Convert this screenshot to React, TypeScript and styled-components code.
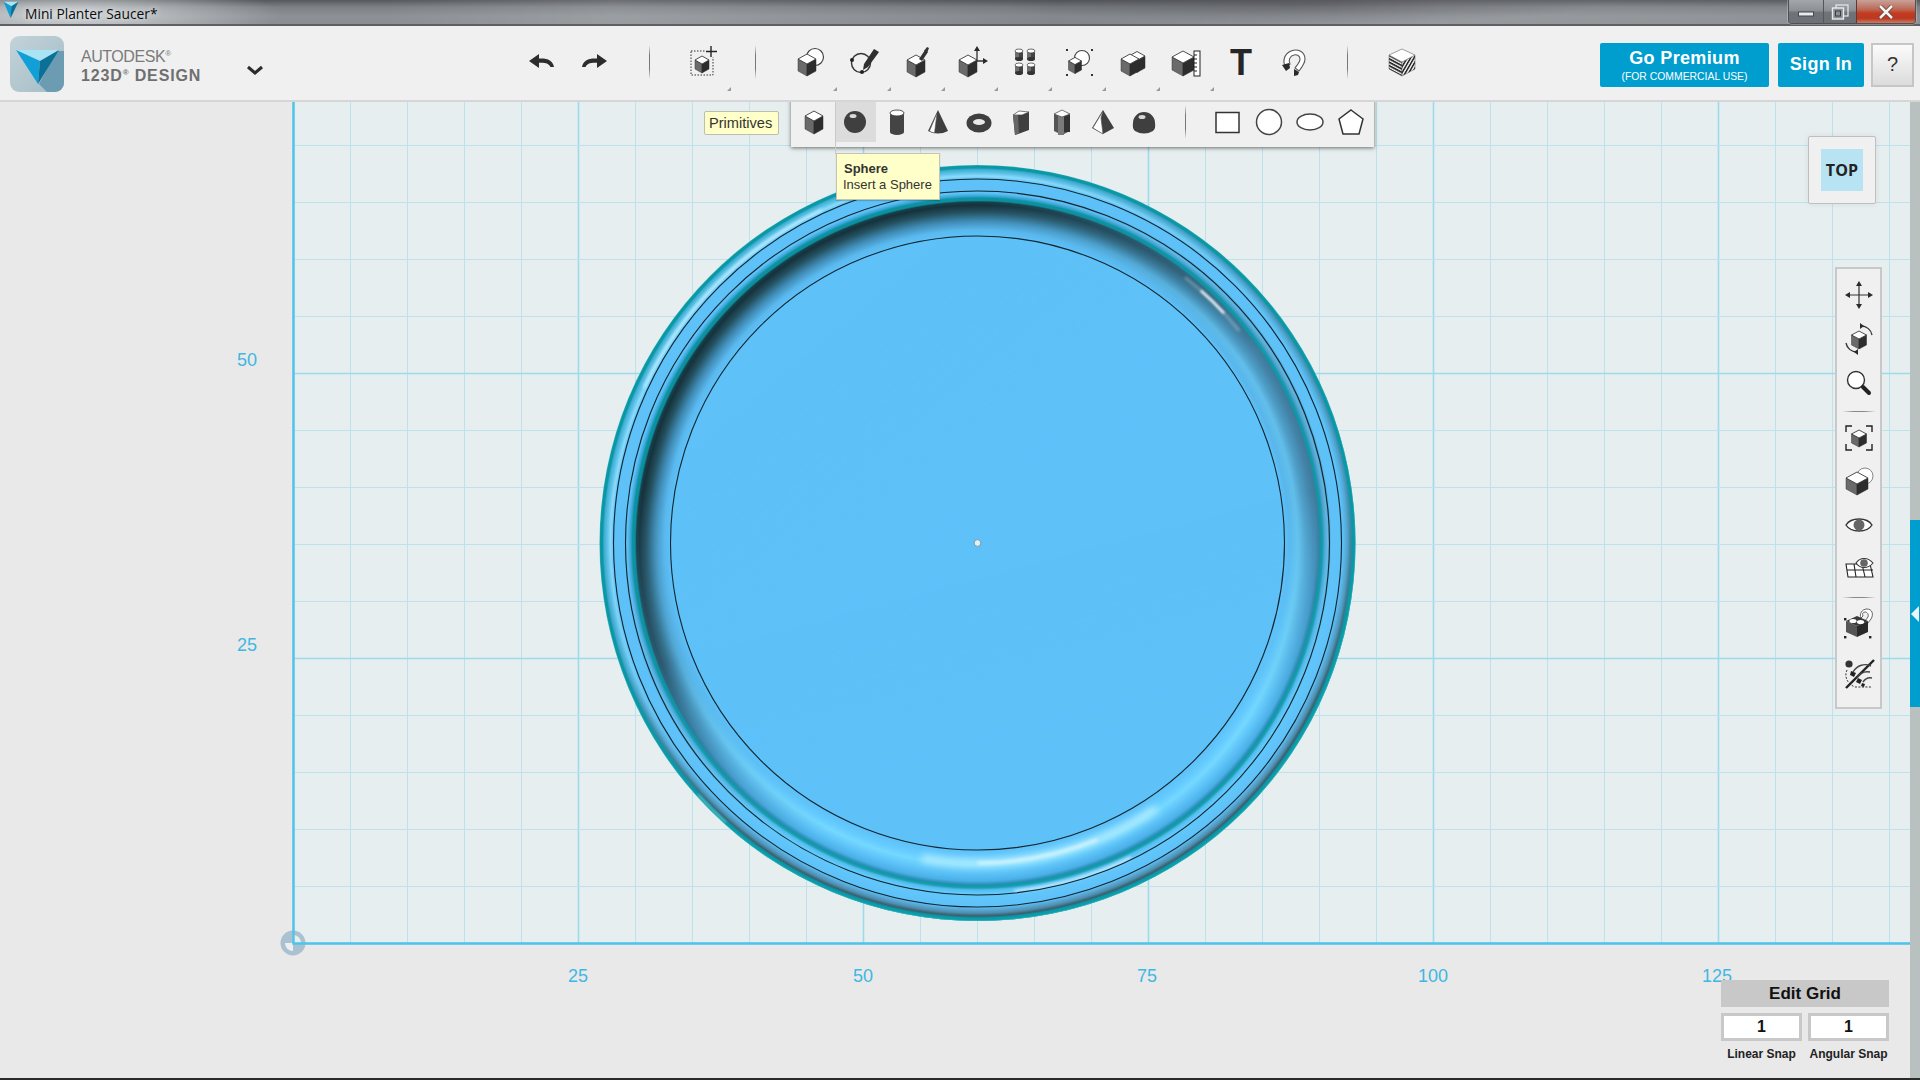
import React from "react";
import styled, { createGlobalStyle } from "styled-components";

const Global = createGlobalStyle`
  html, body { margin: 0; padding: 0; width: 1920px; height: 1080px; overflow: hidden; background: #e9e9e9; }
  body { font-family: "Liberation Sans", Arial, sans-serif; }
`;

const Root = styled.div`
  width: 1920px; height: 1080px; display: flex; flex-direction: column; overflow: hidden;
  border-bottom: 2px solid #2b2b2b; box-sizing: border-box;
`;

const TitleBar = styled.div`
  height: 26px; flex: none; display: flex; align-items: flex-start; box-sizing: border-box;
  border-bottom: 2px solid #5e6063;
  background:
    radial-gradient(ellipse 210px 34px at 70px 14px, rgba(232,236,238,.75), rgba(232,236,238,0) 100%),
    radial-gradient(ellipse 300px 20px at 1300px 4px, rgba(70,72,76,.45), rgba(70,72,76,0) 100%),
    linear-gradient(90deg, rgba(255,255,255,0) 0 20%, rgba(255,255,255,.12) 32%, rgba(0,0,0,.06) 55%, rgba(255,255,255,.1) 75%, rgba(0,0,0,0) 100%),
    linear-gradient(180deg, #56585c 0, #7d8085 7px, #8d9195 16px, #8b8f93 100%);
`;
const TitleMark = styled.span`display: flex; width: 21px; height: 22px; margin-top: 1px; justify-content: center;`;
const TitleText = styled.span`
  font-family: "Open Sans", "Liberation Sans", sans-serif; font-size: 13.8px; line-height: 27px; color: #0c0c0c;
  text-shadow: 0 0 6px rgba(255,255,255,.9); margin-left: 4px;
`;
const WindowButtons = styled.div`
  margin-left: auto; margin-right: 4px; display: flex; height: 23px; border: 1px solid #4d5054; border-top: 0;
  border-radius: 0 0 4px 4px; overflow: hidden; box-shadow: 0 0 0 1px rgba(255,255,255,.25);
`;
const WinBtn = styled.div<{ $w: number; $close?: boolean }>`
  width: ${p => p.$w}px; display: flex; align-items: center; justify-content: center;
  border-left: 1px solid ${p => (p.$close ? "#5b3a33" : "#54575a")};
  &:first-child { border-left: 0; }
  background: ${p =>
    p.$close
      ? "linear-gradient(180deg,#c9a198 0,#bb6a58 40%,#c53a1e 58%,#b93a22 80%,#cf7a60 100%)"
      : "linear-gradient(180deg,#a3a7aa 0,#8d9195 45%,#6f7377 55%,#6d7175 100%)"};
`;

const Toolbar = styled.div`
  height: 76px; flex: none; display: flex; align-items: center; box-sizing: border-box;
  background: #f0f0f0; border-bottom: 2px solid #d6d6d6; padding: 0 6px 3px 10px;
`;
const Brand = styled.div`width: 506px; flex: none; display: flex; align-items: center; margin-top: 4px;`;
const BrandText = styled.div`margin-left: 17px; margin-top: 6px; width: 160px; display: flex; flex-direction: column; color: #7b7b7b;`;
const BrandTop = styled.span`font-size: 16px; line-height: 18px; letter-spacing: -.45px; sup { font-size: 8px; line-height: 0; }`;
const BrandBottom = styled.span`font-size: 16px; line-height: 19px; font-weight: 700; letter-spacing: .85px; color: #6f6f6f; sup { font-size: 8px; line-height: 0; }`;
const Chevron = styled.span`display: flex; margin-left: 5px; margin-top: 15px;`;

const UndoSlot = styled.div`width: 52px; height: 58px; flex: none; display: flex; align-items: center; justify-content: center;`;
const ToolSep = styled.div<{ $ml: number }>`
  width: 1px; height: 34px; flex: none; margin-left: ${p => p.$ml}px; margin-bottom: 0;
  background: linear-gradient(180deg, rgba(90,90,90,0), #777 30%, #777 70%, rgba(90,90,90,0));
`;
const ToolSlot = styled.div<{ $ml?: number; $mark?: boolean }>`
  width: 53.9px; height: 58px; flex: none; margin-left: ${p => p.$ml ?? 0}px; display: flex; align-items: center; justify-content: center; position: relative;
  ${p => p.$mark ? `&::after { content: ""; position: absolute; right: 0; bottom: 0; border-style: solid; border-width: 0 0 4px 4px; border-color: transparent transparent #9a9a9a transparent; }` : ""}
`;
const TextTool = styled.span`font-size: 36px; line-height: 36px; font-weight: 700; color: #262626; margin-top: 2px;`;
const AccountArea = styled.div`margin-left: auto; display: flex; align-items: stretch; height: 44px; margin-top: 6px;`;
const PremiumButton = styled.div`
  width: 169px; background: #009dcf; border-radius: 2px; color: #fff; display: flex; flex-direction: column; align-items: center; justify-content: center;
`;
const PremiumMain = styled.span`font-size: 18px; line-height: 20px; font-weight: 700; letter-spacing: .35px; margin-top: 1px;`;
const PremiumSub = styled.span`font-size: 10.4px; line-height: 13px; margin-top: 2px;`;
const SignIn = styled.div`
  width: 86px; margin-left: 9px; background: #009dcf; border-radius: 2px; color: #fff; font-size: 18px; font-weight: 700; letter-spacing: .35px;
  display: flex; align-items: center; justify-content: center;
`;
const HelpButton = styled.div`
  width: 43px; margin-left: 7px; box-sizing: border-box; border: 2px solid #c6c6c6; background: linear-gradient(180deg,#fbfbfb,#dcdcdc); color: #333;
  font-size: 20px; display: flex; align-items: center; justify-content: center;
`;

const Canvas = styled.div`flex: 1; position: relative; background: #e9e9e9; overflow: hidden;`;
const Scene = styled.svg`display: block; position: absolute; left: 0; top: 0; width: 1920px; height: 976px;`;
const AxisLabel = styled.span<{ $x: number; $y: number }>`
  position: absolute; left: ${p => p.$x}px; top: ${p => p.$y - 102}px; transform: translate(-50%, -50%);
  color: #3fb7e2; font-size: 18px; line-height: 20px;
`;
const SideStrip = styled.div`
  position: absolute; right: 0; top: 0; bottom: 0; width: 10px; background: #b9c0c0;
`;
const SideHandle = styled.div`
  position: absolute; left: 0; right: 0; top: 418px; height: 187px; background: #009dcf; display: flex; align-items: center;
  &::after { content: ""; margin-top: 0; border-style: solid; border-width: 8px 8px 8px 0; border-color: transparent #eaf6fb transparent transparent; margin-left: 1px; }
`;

const Popup = styled.div`
  position: absolute; left: 791px; top: -4px; width: 583px; height: 49px; box-sizing: border-box; background: #f0f0f0;
  box-shadow: 0 1px 4px rgba(0,0,0,.55); display: flex; align-items: center; padding: 0 0 2px 2.4px;
  &::before { content: ""; position: absolute; left: 19px; top: -6px; border-style: solid; border-width: 0 6px 6px 6px; border-color: transparent transparent #f0f0f0 transparent; }
`;
const PopSlot = styled.div<{ $active?: boolean }>`
  width: 41.3px; height: 40px; flex: none; display: flex; align-items: center; justify-content: center;
  background: ${p => (p.$active ? "#dcdcdc" : "transparent")};
`;
const PopSep = styled.div`
  width: 1px; height: 34px; flex: none; margin: 0 21px 0 19.5px;
  background: linear-gradient(180deg, rgba(90,90,90,0), #777 30%, #777 70%, rgba(90,90,90,0));
`;
const TipGuide = styled.div`position: absolute; left: 835px; top: -12px; width: 1px; height: 64px; background: #c9c9c9;`;
const PrimitivesTip = styled.div`
  position: absolute; left: 704px; top: 9px; width: 75px; height: 24px; box-sizing: border-box; background: #ffffc9; border: 1px solid #bdbdb0; border-radius: 2px;
  color: #333; font-size: 14.6px; line-height: 22px; padding-left: 4px; white-space: nowrap;
`;
const SphereTip = styled.div`
  position: absolute; left: 836px; top: 51px; width: 104px; height: 47px; box-sizing: border-box; background: #ffffc9; border: 1px solid #c4c4b4; border-left-width: 1px;
  box-shadow: 0 1px 1px rgba(0,0,0,.18); color: #333; padding: 7px 0 0 6px; font-size: 13px; line-height: 16px;
`;
const TipTitle = styled.div`font-weight: 700; padding-left: 1px;`;

const ViewCube = styled.div`
  position: absolute; left: 1808px; top: 34px; width: 68px; height: 68px; box-sizing: border-box; background: #f0f0f0; border: 1px solid #bfbfbf; border-radius: 2px;
  box-shadow: 0 0 6px rgba(0,0,0,.08); display: flex; align-items: center; justify-content: center;
`;
const ViewFace = styled.div`
  width: 42px; height: 42px; background: #b8e3f2; color: #222; font-family: "Open Sans", "Liberation Sans", sans-serif; font-size: 16px; font-weight: 700; letter-spacing: .1px;
  display: flex; align-items: center; justify-content: center;
`;

const NavPanel = styled.div`
  position: absolute; left: 1835px; top: 165px; width: 47px; height: 442px; box-sizing: border-box; background: #f0f0f0; border: 2px solid #c8c8c8;
  display: flex; flex-direction: column; align-items: center; padding-top: 5px;
`;
const NavGroup = styled.div<{ $gap: number; $mt?: number }>`display: flex; flex-direction: column; gap: ${p => p.$gap}px; margin-top: ${p => p.$mt ?? 0}px;`;
const NavSlot = styled.div`width: 42px; height: 42px; display: flex; align-items: center; justify-content: center;`;
const NavSep = styled.div<{ $mt: number }>`
  width: 34px; height: 1px; flex: none; margin-top: ${p => p.$mt}px;
  background: linear-gradient(90deg, rgba(90,90,90,0), #888 35%, #888 65%, rgba(90,90,90,0));
`;

const GridPanel = styled.div`position: absolute; left: 1721px; top: 878px; width: 168px; display: flex; flex-direction: column;`;
const EditGridButton = styled.div`
  height: 27px; background: #c8c8c8; color: #111; font-size: 17px; font-weight: 700; line-height: 27px; text-align: center;
`;
const SnapRow = styled.div`display: grid; grid-template-columns: 81px 81px; gap: 6px; margin-top: 6px;`;
const SnapCell = styled.div`display: flex; flex-direction: column; align-items: center;`;
const SnapInput = styled.div`
  width: 100%; height: 28px; box-sizing: border-box; border: 3px solid #c8c8c8; background: #fff; color: #111; font-size: 16px; font-weight: 700; line-height: 22px; text-align: center;
`;
const SnapLabel = styled.span`margin-top: 6px; font-size: 12px; line-height: 14px; font-weight: 700; color: #222; white-space: nowrap;`;

const Glyph = styled.svg<{ $s?: number }>`display: block; width: ${p => p.$s ?? 32}px; height: ${p => p.$s ?? 32}px; overflow: visible;`;

/* ---------- drawing helpers ---------- */
const pt = (a: [number, number][]) => a.map(p => p.join(",")).join(" ");
const Cube = ({ x, y, w, d, h }: { x: number; y: number; w: number; d: number; h: number }) => (
  <g>
    <polygon points={pt([[x - w, y], [x, y + d], [x, y + d + h], [x - w, y + h]])} fill="#6a6a6a" stroke="#3a3a3a" strokeWidth=".5" />
    <polygon points={pt([[x + w, y], [x, y + d], [x, y + d + h], [x + w, y + h]])} fill="#2d2d2d" stroke="#2d2d2d" strokeWidth=".5" />
    <polygon points={pt([[x, y - d], [x + w, y], [x, y + d], [x - w, y]])} fill="#fff" stroke="#3a3a3a" strokeWidth=".9" />
  </g>
);
const Arrow = ({ d }: { d: string }) => <path d={d} fill="#2a2a2a" />;

const IconUndo = () => (
  <Glyph viewBox="0 0 32 32"><path d="M3 15l10-7v4.6c8 -.6 14 1.8 15 8.4h-3.6c-1-3.2-5-4.6-11.4-4.2V22z" fill="#2d2d2d" /></Glyph>
);
const IconRedo = () => (
  <Glyph viewBox="0 0 32 32"><path d="M29 15L19 8v4.6C11 12 5 14.4 4 21h3.6c1-3.2 5-4.6 11.4-4.2V22z" fill="#2d2d2d" /></Glyph>
);
const IconAdd = () => (
  <Glyph viewBox="0 0 32 32">
    <rect x="3" y="5" width="22" height="24" fill="none" stroke="#333" strokeWidth="1" strokeDasharray="1.5 1.5" />
    <rect x="17" y="0" width="12" height="11" fill="#f0f0f0" />
    <path d="M23 0v11M18 5.5h11" stroke="#222" strokeWidth="1.4" />
    <Cube x={14} y={14} w={7} d={4} h={9} />
  </Glyph>
);
const IconPrimitives = () => (
  <Glyph viewBox="0 0 32 32">
    <circle cx="21" cy="11" r="8.5" fill="#fff" stroke="#444" strokeWidth="1.2" />
    <Cube x={13} y={13} w={9} d={5} h={12} />
  </Glyph>
);
const IconSketch = () => (
  <Glyph viewBox="0 0 32 32">
    <circle cx="13" cy="17" r="9.5" fill="none" stroke="#333" strokeWidth="1.4" />
    <path d="M26 3l5 3-11 15-5 3 1-6z" fill="#2f2f2f" />
    <circle cx="4" cy="14" r="2" fill="#222" /><circle cx="14" cy="26" r="2" fill="#222" />
  </Glyph>
);
const IconConstruct = () => (
  <Glyph viewBox="0 0 32 32">
    <Cube x={14} y={14} w={9} d={5} h={12} />
    <path d="M17 13l6-9 3 2-6 9z" fill="#333" /><path d="M22 5l3-4 2 1-2 5z" fill="#333" />
  </Glyph>
);
const IconModify = () => (
  <Glyph viewBox="0 0 32 32">
    <Cube x={12} y={14} w={9} d={5} h={12} />
    <path d="M21 2v13h9" fill="none" stroke="#333" strokeWidth="1.3" />
    <Arrow d="M21 0l3 5h-6z" /><Arrow d="M32 15l-5 3v-6z" />
  </Glyph>
);
const Can = ({ x, y }: { x: number; y: number }) => (
  <g>
    <rect x={x - 4} y={y} width="8" height="8" fill="#444" />
    <rect x={x - 4} y={y} width="4" height="8" fill="#6f6f6f" />
    <ellipse cx={x} cy={y + 8} rx="4" ry="2" fill="#333" />
    <ellipse cx={x} cy={y} rx="4" ry="2" fill="#fff" stroke="#333" strokeWidth=".7" />
  </g>
);
const IconPattern = () => (
  <Glyph viewBox="0 0 32 32">
    <Can x={10} y={5} /><Can x={22} y={5} /><Can x={10} y={19} /><Can x={22} y={19} />
  </Glyph>
);
const IconGroup = () => (
  <Glyph viewBox="0 0 32 32">
    <circle cx="19" cy="12" r="7.5" fill="#fff" stroke="#444" strokeWidth="1.1" />
    <Cube x={12} y={15} w={6.5} d={3.6} h={9} />
    {[[3, 3], [28, 3], [3, 28], [28, 28]].map(([a, b]) => <rect key={a + "-" + b} x={a} y={b} width="2" height="2" fill="#333" />)}
  </Glyph>
);
const IconCombine = () => (
  <Glyph viewBox="0 0 32 32">
    <Cube x={20} y={10} w={8} d={4.5} h={12} />
    <Cube x={13} y={13} w={9} d={5} h={12} />
  </Glyph>
);
const IconMeasure = () => (
  <Glyph viewBox="0 0 32 32">
    <Cube x={12} y={11} w={11} d={6} h={13} />
    <rect x="23" y="5" width="6" height="25" fill="#fff" stroke="#222" strokeWidth="1" />
    <path d="M23 9h3M23 13h3M23 17h3M23 21h3M23 25h3" stroke="#222" strokeWidth="1.2" />
  </Glyph>
);
const IconMagnet = () => (
  <Glyph viewBox="0 0 32 32">
    <path d="M7 21C3 16 5 8 12 5c7-3 14 1 14 8 0 4-2 7-6 12l-4-3c3-4 5-6 5-9 0-3-3-5-6-4-4 1-6 5-4 9z" fill="#fff" stroke="#555" strokeWidth="1.1" />
    <path d="M3 19l7-2 1 5-4 3z" fill="#2a2a2a" /><path d="M15 23l5 3-1 3-4 1z" fill="#2a2a2a" />
  </Glyph>
);
const IconMaterial = () => (
  <Glyph viewBox="0 0 32 32">
    <defs>
      <pattern id="stripeL" width="4" height="3.4" patternUnits="userSpaceOnUse" patternTransform="skewY(28)"><rect width="4" height="3.4" fill="#f4f4f4" /><rect width="4" height="2" fill="#2b2b2b" /></pattern>
      <pattern id="stripeR" width="3.4" height="4" patternUnits="userSpaceOnUse" patternTransform="skewX(-30)"><rect width="3.4" height="4" fill="#f4f4f4" /><rect width="1.8" height="4" fill="#2b2b2b" /></pattern>
    </defs>
    <polygon points="3,9 16,16 16,30 3,23" fill="url(#stripeL)" stroke="#555" strokeWidth=".5" />
    <polygon points="29,9 16,16 16,30 29,23" fill="url(#stripeR)" stroke="#555" strokeWidth=".5" />
    <polygon points="16,3 29,9 16,16 3,9" fill="#fff" stroke="#777" strokeWidth=".7" />
  </Glyph>
);

const PBox = () => <Glyph viewBox="0 0 32 32"><Cube x={16} y={10} w={9} d={5} h={13} /></Glyph>;
const PSphere = () => (
  <Glyph viewBox="0 0 32 32"><circle cx="16" cy="16" r="11" fill="#3f3f3f" /><ellipse cx="14" cy="10" rx="3.5" ry="2" fill="#d8d8d8" /></Glyph>
);
const PCylinder = () => (
  <Glyph viewBox="0 0 32 32"><path d="M9 7v19a7 3 0 0 0 14 0V7z" fill="#444" /><ellipse cx="16" cy="7" rx="7" ry="3" fill="#fff" stroke="#444" strokeWidth=".9" /></Glyph>
);
const PCone = () => (
  <Glyph viewBox="0 0 32 32"><path d="M16 4L6 25q10 5 20 0z" fill="#3f3f3f" /><path d="M15 7L7.5 25q2.5 1.6 5 2z" fill="#fff" stroke="#555" strokeWidth=".6" /></Glyph>
);
const PTorus = () => (
  <Glyph viewBox="0 0 32 32"><ellipse cx="16" cy="17" rx="12.5" ry="9.5" fill="#3f3f3f" /><ellipse cx="16" cy="16" rx="6" ry="3" fill="#e8e8e8" /></Glyph>
);
const PWedge = () => (
  <Glyph viewBox="0 0 32 32"><polygon points="8,9 10,29 24,24 24,6" fill="#3f3f3f" /><polygon points="8,9 14,5 24,6 17,9" fill="#fff" stroke="#444" strokeWidth=".7" /><polygon points="8,9 10,29 14,27 13,9" fill="#666" /></Glyph>
);
const PPrism = () => (
  <Glyph viewBox="0 0 32 32"><polygon points="8,8 8,25 16,29 24,25 24,8 16,5" fill="#555" /><rect x="12" y="10" width="6" height="19" fill="#7a7a7a" /><rect x="18" y="9" width="6" height="17" fill="#333" /><polygon points="8,8 16,4 24,8 16,11" fill="#fff" stroke="#555" strokeWidth=".8" /></Glyph>
);
const PPyramid = () => (
  <Glyph viewBox="0 0 32 32"><polygon points="16,4 5,22 16,28 27,22" fill="#3f3f3f" /><polygon points="16,5 5.8,22 16,28 14,12" fill="#fff" stroke="#555" strokeWidth=".7" /></Glyph>
);
const PHalf = () => (
  <Glyph viewBox="0 0 32 32"><path d="M5 17a11 11 0 0 1 22 0q1 5-2 8-9 5-18 0-3-3-2-8z" fill="#3f3f3f" /><ellipse cx="14" cy="11" rx="3.5" ry="2" fill="#d8d8d8" /></Glyph>
);
const PRect = () => <Glyph viewBox="0 0 32 32"><rect x="5" y="6.5" width="23" height="20" fill="#fff" stroke="#333" strokeWidth="1.5" /></Glyph>;
const PCircle = () => <Glyph viewBox="0 0 32 32"><circle cx="16" cy="16" r="12.5" fill="#fff" stroke="#444" strokeWidth="1.5" /></Glyph>;
const PEllipse = () => <Glyph viewBox="0 0 32 32"><ellipse cx="16" cy="16" rx="13" ry="8" fill="#fff" stroke="#444" strokeWidth="1.5" /></Glyph>;
const PPoly = () => <Glyph viewBox="0 0 32 32"><polygon points="16,4 28,13 24,28 8,28 4,13" fill="#fff" stroke="#333" strokeWidth="1.5" /></Glyph>;

const NPan = () => (
  <Glyph viewBox="0 0 32 32">
    <path d="M16 5v22M5 16h22" stroke="#333" strokeWidth="1.2" />
    <Arrow d="M16 2l3 5h-6z" /><Arrow d="M16 30l3-5h-6z" /><Arrow d="M2 16l5-3v6z" /><Arrow d="M30 16l-5-3v6z" />
  </Glyph>
);
const NOrbit = () => (
  <Glyph viewBox="0 0 32 32">
    <Cube x={16} y={12} w={7.5} d={4} h={10} />
    <path d="M18 3c6 0 10 4 11 9M14 29c-6 0-10-4-11-9" fill="none" stroke="#333" strokeWidth="1.3" />
    <Arrow d="M17 0l4 3-4 3z" /><Arrow d="M15 32l-4-3 4-3z" />
  </Glyph>
);
const NZoom = () => (
  <Glyph viewBox="0 0 32 32">
    <circle cx="13" cy="13" r="8.5" fill="#fff" stroke="#333" strokeWidth="1.4" />
    <path d="M20 20l6 6" stroke="#222" strokeWidth="4" strokeLinecap="round" />
  </Glyph>
);
const NFit = () => (
  <Glyph viewBox="0 0 32 32">
    <path d="M9 4H3v6M23 4h6v6M9 28H3v-6M23 28h6v-6" fill="none" stroke="#222" strokeWidth="1.4" />
    <Cube x={16} y={12} w={7.5} d={4} h={9} />
  </Glyph>
);
const NPersp = () => (
  <Glyph viewBox="0 0 32 32">
    <circle cx="22" cy="11" r="8" fill="#fff" stroke="#888" strokeWidth="1" />
    <Cube x={14} y={13} w={11} d={6} h={11} />
  </Glyph>
);
const NEye = () => (
  <Glyph viewBox="0 0 32 32">
    <path d="M3 16C8 8 24 8 29 16 24 24 8 24 3 16z" fill="#fff" stroke="#333" strokeWidth="1.4" />
    <circle cx="16" cy="16" r="5.5" fill="#666" />
  </Glyph>
);
const NEyeGrid = () => (
  <Glyph viewBox="0 0 32 32">
    <path d="M3 12h24l3 13H5z" fill="#fff" stroke="#222" strokeWidth="1.1" />
    <path d="M4 18h26M11 12l2 13M19 12l3 13" stroke="#222" strokeWidth="1.1" />
    <path d="M13 11C17 5 25 5 30 11 25 17 17 17 13 11z" fill="#fff" stroke="#333" strokeWidth="1.1" />
    <circle cx="21" cy="11" r="3.8" fill="#666" />
  </Glyph>
);
const NSnapBox = () => (
  <Glyph viewBox="0 0 32 32">
    <path d="M18 11c-2-4 1-9 6-9 5 0 7 5 4 10l-3 4-3-2 3-4c1-3-1-5-3-5s-3 2-2 4z" fill="#fff" stroke="#555" strokeWidth=".9" />
    <polygon points="3,14 14,19 14,30 3,25" fill="#555" />
    <polygon points="25,14 14,19 14,30 25,25" fill="#2a2a2a" />
    <polygon points="14,9 25,14 14,19 3,14" fill="#3a3a3a" />
    <ellipse cx="10" cy="14" rx="3.6" ry="2" fill="#fff" /><ellipse cx="17.5" cy="15" rx="3.6" ry="2" fill="#fff" />
    {[[1, 11], [1, 29], [26, 29]].map(([a, b]) => <rect key={a + "-" + b} x={a} y={b} width="2.4" height="2.4" fill="#222" />)}
  </Glyph>
);
const NMagnetTools = () => (
  <Glyph viewBox="0 0 32 32">
    <circle cx="6" cy="6" r="3.6" fill="#333" />
    <path d="M4 12c-3 6 0 14 8 17h16" fill="none" stroke="#333" strokeWidth="1" strokeDasharray="2 1.5" />
    <path d="M31 2L3 30" stroke="#222" strokeWidth="2.4" />
    <path d="M10 14c4-7 12-9 18-6M14 20c3-5 8-7 13-6M20 24c2-3 5-5 9-4" fill="none" stroke="#444" strokeWidth="1.4" />
    <path d="M8 13l5 2-2 4-4-2zM15 20l4 2-2 4-4-2zM19 25l3 1-1 3-3-1z" fill="#222" />
  </Glyph>
);

const VMark = ({ s }: { s: number }) => (
  <Glyph viewBox="0 0 40 44" $s={s}>
    <polygon points="2,2 38,2 21,13" fill="#a9e3f6" />
    <polygon points="2,2 21,13 19,42" fill="#109fd6" />
    <polygon points="38,2 21,13 19,42" fill="#0c6f96" />
  </Glyph>
);

const LogoBadge = () => (
  <svg width="54" height="56" viewBox="0 0 54 56" style={{ display: "block", flex: "none" }}>
    <defs><linearGradient id="lg" x1="0" y1="0" x2="1" y2="1"><stop offset="0" stopColor="#c3d3d9" /><stop offset="1" stopColor="#a4bcc7" /></linearGradient></defs>
    <rect width="54" height="56" rx="9" fill="url(#lg)" />
    <path d="M29 48L47 15l7 0v32a9 9 0 0 1-9 9H37z" fill="#6b9cb2" />
    <polygon points="6,14 49,14 30,25" fill="#a9e3f6" />
    <polygon points="6,14 30,25 28,48" fill="#109fd6" />
    <polygon points="49,14 30,25 28,48" fill="#0c6f96" />
  </svg>
);

const cx = 977.5, cy = 543;
const polar = (r: number, deg: number) => {
  const a = (deg * Math.PI) / 180;
  return [cx + r * Math.cos(a), cy + r * Math.sin(a)].map(v => v.toFixed(1)).join(" ");
};
const arc = (r: number, from: number, to: number) => `M${polar(r, from)}A${r} ${r} 0 0 ${to > from ? 1 : 0} ${polar(r, to)}`;

const R = 378;
const darkProfile: [number, string][] = [
  [307, "#5ec1f8"], [313, "#5ab9ef"], [322, "#3f8ab4"], [331, "#24505f"], [338, "#16323c"], [341, "#15414c"],
  [342.5, "#0d8d9c"], [345, "#0b93a3"], [347, "#3aa6d6"], [350, "#5ec1f8"], [364, "#5ec1f8"], [367, "#8bdcfb"],
  [370, "#62c4ec"], [373.5, "#3eaed0"], [375, "#0b98a6"], [377, "#0b98a6"], [378, "#3ab0bc"],
];
const midProfile: [number, string][] = [
  [307, "#5ec1f8"], [312, "#58b6ec"], [320, "#62bfea"], [328, "#4d9cc6"], [336, "#4484a8"], [341.5, "#3f7a9c"],
  [343, "#0e97a6"], [345, "#1898ac"], [347, "#4a9ecb"], [350, "#62b4dc"], [352, "#4f9fcb"], [354, "#5ec1f8"],
  [366, "#5ec1f8"], [370, "#52acd8"], [373.5, "#4490b4"], [375, "#0b98a6"], [377, "#0b98a6"], [378, "#3ab0bc"],
];
const lightProfile: [number, string][] = [
  [307, "#5ec1f8"], [311, "#60c5fb"], [316, "#66ccff"], [322, "#74d8ff"], [330, "#5fc4f8"], [338, "#4bb0e8"],
  [341.5, "#2a90b8"], [343, "#0f98a8"], [345, "#1f9eb4"], [347, "#50bcee"], [350, "#62c8fb"], [364, "#5ec1f8"], [366, "#5aaede"],
  [370, "#4f8fb0"], [373, "#38606f"], [375, "#0b98a6"], [377, "#0aa0ae"], [378, "#40b8c2"],
];
const Stops = ({ list }: { list: [number, string][] }) => (
  <>{list.map(([r, c]) => <stop key={r} offset={r / R} stopColor={c} />)}</>
);

const xs: number[] = [];
for (let x = 293; x < 1910; x += 57) xs.push(x);
const ys: number[] = [];
for (let y = 943; y > 102; y -= 57) ys.push(y);

const tools = [IconPrimitives, IconSketch, IconConstruct, IconModify, IconPattern, IconGroup, IconCombine, IconMeasure];
const solids = [PBox, PSphere, PCylinder, PCone, PTorus, PWedge, PPrism, PPyramid, PHalf];
const shapes = [PRect, PCircle, PEllipse, PPoly];

export default function App() {
  return (
    <Root>
      <Global />
      <TitleBar>
        <TitleMark><VMark s={18} /></TitleMark>
        <TitleText>Mini Planter Saucer*</TitleText>
        <WindowButtons>
          <WinBtn $w={34}>
            <svg width="16" height="10" viewBox="0 0 16 10"><rect x="0.5" y="5" width="15" height="4" fill="#e8eaec" stroke="#45484b" /></svg>
          </WinBtn>
          <WinBtn $w={32}>
            <svg width="18" height="16" viewBox="0 0 18 16"><rect x="5" y="1" width="12" height="11" fill="none" stroke="#e8eaec" strokeWidth="1.2" /><rect x="1.5" y="4" width="11" height="11" fill="#8c9093" stroke="#e8eaec" strokeWidth="1.4" /><rect x="4.5" y="7" width="5" height="5" fill="none" stroke="#3c3f42" /></svg>
          </WinBtn>
          <WinBtn $w={58} $close>
            <svg width="16" height="14" viewBox="0 0 16 14"><path d="M2 1l12 12M14 1L2 13" stroke="#5b3a33" strokeWidth="4" /><path d="M2 1l12 12M14 1L2 13" stroke="#f4f4f4" strokeWidth="2.6" /></svg>
          </WinBtn>
        </WindowButtons>
      </TitleBar>

      <Toolbar>
        <Brand>
          <LogoBadge />
          <BrandText>
            <BrandTop>AUTODESK<sup>®</sup></BrandTop>
            <BrandBottom>123D<sup>®</sup> DESIGN</BrandBottom>
          </BrandText>
          <Chevron>
            <svg width="18" height="12" viewBox="0 0 18 12"><path d="M2 2l7 6 7-6" fill="none" stroke="#2c2c2c" strokeWidth="3" /></svg>
          </Chevron>
        </Brand>
        <UndoSlot><IconUndo /></UndoSlot>
        <UndoSlot><IconRedo /></UndoSlot>
        <ToolSep $ml={29} />
        <ToolSlot $ml={27} $mark><IconAdd /></ToolSlot>
        <ToolSep $ml={24} />
        <ToolSlot $ml={27} $mark><IconPrimitives /></ToolSlot>
        {tools.slice(1).map((T, i) => <ToolSlot key={i} $mark><T /></ToolSlot>)}
        <ToolSlot><TextTool>T</TextTool></ToolSlot>
        <ToolSlot><IconMagnet /></ToolSlot>
        <ToolSep $ml={25} />
        <ToolSlot $ml={27}><IconMaterial /></ToolSlot>
        <AccountArea>
          <PremiumButton>
            <PremiumMain>Go Premium</PremiumMain>
            <PremiumSub>(FOR COMMERCIAL USE)</PremiumSub>
          </PremiumButton>
          <SignIn>Sign In</SignIn>
          <HelpButton>?</HelpButton>
        </AccountArea>
      </Toolbar>

      <Canvas>
        <Scene viewBox="0 102 1920 976">
          <defs>
            <radialGradient id="profileDark" gradientUnits="userSpaceOnUse" cx={cx} cy={cy} r={R}><Stops list={darkProfile} /></radialGradient>
            <radialGradient id="profileMid" gradientUnits="userSpaceOnUse" cx={cx} cy={cy} r={R}><Stops list={midProfile} /></radialGradient>
            <radialGradient id="profileLight" gradientUnits="userSpaceOnUse" cx={cx} cy={cy} r={R}><Stops list={lightProfile} /></radialGradient>
            <linearGradient id="shadeMid" gradientUnits="userSpaceOnUse" x1="813" y1="348" x2="999" y2="569">
              <stop offset="0" stopColor="#000" /><stop offset="1" stopColor="#fff" />
            </linearGradient>
            <linearGradient id="shadeLight" gradientUnits="userSpaceOnUse" x1="986" y1="576" x2="1039" y2="773">
              <stop offset="0" stopColor="#000" /><stop offset="1" stopColor="#fff" />
            </linearGradient>
            <mask id="midMask" maskUnits="userSpaceOnUse" x="500" y="60" width="960" height="960">
              <rect x="500" y="60" width="960" height="960" fill="url(#shadeMid)" />
            </mask>
            <mask id="lightMask" maskUnits="userSpaceOnUse" x="500" y="60" width="960" height="960">
              <rect x="500" y="60" width="960" height="960" fill="url(#shadeLight)" />
            </mask>
            <filter id="hair" x="-20%" y="-20%" width="140%" height="140%"><feGaussianBlur stdDeviation="1" /></filter>
            <filter id="soft" x="-20%" y="-20%" width="140%" height="140%"><feGaussianBlur stdDeviation="1.8" /></filter>
            <filter id="softer" x="-20%" y="-20%" width="140%" height="140%"><feGaussianBlur stdDeviation="3.5" /></filter>
          </defs>

          <rect x="293" y="102" width="1627" height="841" fill="#e6eeef" />
          {xs.map((x, i) => (
            <line key={x} x1={x + .5} x2={x + .5} y1="102" y2="943" stroke={i % 5 === 0 ? "#9ddaec" : "#bde2ec"} strokeWidth={i % 5 === 0 ? 1.6 : 1} />
          ))}
          {ys.map((y, i) => (
            <line key={y} y1={y + .5} y2={y + .5} x1="293" x2="1910" stroke={i % 5 === 0 ? "#9ddaec" : "#bde2ec"} strokeWidth={i % 5 === 0 ? 1.6 : 1} />
          ))}

          <circle cx="293" cy="943" r="12.5" fill="#aac1d1" />
          <path d="M293 943L293 951A8 8 0 0 1 285 943z" fill="#eef0f0" />
          <path d="M293 943L293 935A8 8 0 0 1 301 943z" fill="#e6eeef" />
          <path d="M293.5 102V943.5H1910" fill="none" stroke="#4fc4ea" strokeWidth="2.4" />

          <circle cx={cx} cy={cy} r={R} fill="url(#profileDark)" />
          <circle cx={cx} cy={cy} r={R} fill="url(#profileMid)" mask="url(#midMask)" />
          <circle cx={cx} cy={cy} r={R} fill="url(#profileLight)" mask="url(#lightMask)" />

          <path d={arc(320, 56, 100)} fill="none" stroke="#bff2ff" strokeWidth="8" opacity=".8" filter="url(#softer)" />
          <path d={arc(320, 68, 90)} fill="none" stroke="#e6fbff" strokeWidth="3" opacity=".75" filter="url(#soft)" />
          <path d={arc(350, 64, 84)} fill="none" stroke="#f0fdff" strokeWidth="1.8" filter="url(#soft)" />
          <path d={arc(337, -52, -39)} fill="none" stroke="#b6ccd8" strokeWidth="2.4" opacity=".55" filter="url(#soft)" />
          <path d={arc(337, -48.5, -43)} fill="none" stroke="#ffffff" strokeWidth="2" filter="url(#hair)" />
          <path d={arc(368, 205, 245)} fill="none" stroke="#d8f7ff" strokeWidth="1.6" filter="url(#soft)" />
          <path d={arc(376, 132, 138)} fill="none" stroke="#ffffff" strokeWidth="1" opacity=".8" filter="url(#hair)" />

          {[364, 352, 307].map(r => (
            <circle key={r} cx={cx} cy={cy} r={r} fill="none" stroke="#11262f" strokeWidth="1.1" />
          ))}
          <circle cx={cx} cy={cy} r="3.4" fill="#dff0f6" stroke="#7d97a3" strokeWidth="1" />
        </Scene>

        <AxisLabel $x={247} $y={360}>50</AxisLabel>
        <AxisLabel $x={247} $y={645}>25</AxisLabel>
        <AxisLabel $x={578} $y={976}>25</AxisLabel>
        <AxisLabel $x={863} $y={976}>50</AxisLabel>
        <AxisLabel $x={1147} $y={976}>75</AxisLabel>
        <AxisLabel $x={1433} $y={976}>100</AxisLabel>
        <AxisLabel $x={1717} $y={976}>125</AxisLabel>

        <SideStrip><SideHandle /></SideStrip>

        <ViewCube><ViewFace>TOP</ViewFace></ViewCube>

        <NavPanel>
          <NavGroup $gap={2}>
            <NavSlot><NPan /></NavSlot>
            <NavSlot><NOrbit /></NavSlot>
            <NavSlot><NZoom /></NavSlot>
          </NavGroup>
          <NavSep $mt={7} />
          <NavGroup $gap={1.3} $mt={5}>
            <NavSlot><NFit /></NavSlot>
            <NavSlot><NPersp /></NavSlot>
            <NavSlot><NEye /></NavSlot>
            <NavSlot><NEyeGrid /></NavSlot>
          </NavGroup>
          <NavSep $mt={8} />
          <NavGroup $gap={9} $mt={4}>
            <NavSlot><NSnapBox /></NavSlot>
            <NavSlot><NMagnetTools /></NavSlot>
          </NavGroup>
        </NavPanel>

        <GridPanel>
          <EditGridButton>Edit Grid</EditGridButton>
          <SnapRow>
            <SnapCell><SnapInput>1</SnapInput><SnapLabel>Linear Snap</SnapLabel></SnapCell>
            <SnapCell><SnapInput>1</SnapInput><SnapLabel>Angular Snap</SnapLabel></SnapCell>
          </SnapRow>
        </GridPanel>

        <PrimitivesTip>Primitives</PrimitivesTip>
        <Popup>
          {solids.map((S, i) => <PopSlot key={i} $active={i === 1}><S /></PopSlot>)}
          <PopSep />
          {shapes.map((S, i) => <PopSlot key={i}><S /></PopSlot>)}
        </Popup>
        <TipGuide />
        <SphereTip>
          <TipTitle>Sphere</TipTitle>
          Insert a Sphere
        </SphereTip>
      </Canvas>
    </Root>
  );
}
